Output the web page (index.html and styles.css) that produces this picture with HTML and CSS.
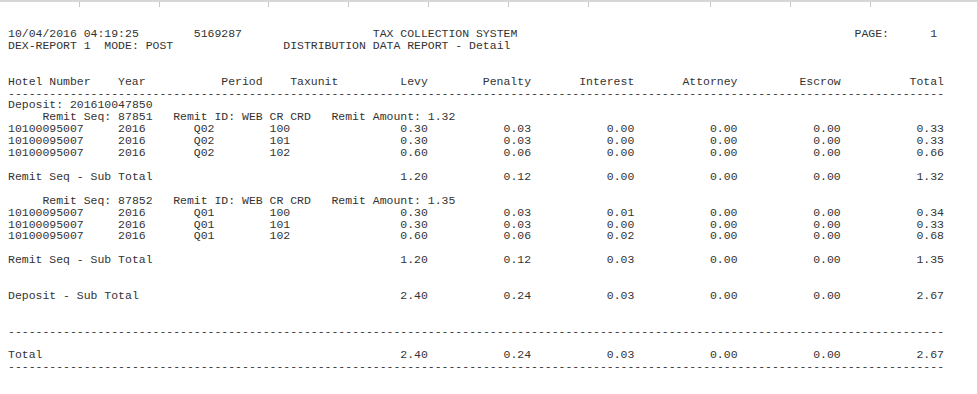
FILE: index.html
```html
<!DOCTYPE html>
<html lang="en">
<head>
<meta charset="utf-8">
<title>Distribution Data Report - Detail</title>
<link rel="stylesheet" href="styles.css">
</head>
<body>
<div class="ruler">
  <span class="rc w80"></span><span class="rc w80"></span><span class="rc w109"></span><span class="rc w80"></span><span class="rc w80"></span><span class="rc w80"></span><span class="rc w80"></span><span class="rc w122"></span><span class="rc w80"></span><span class="rc w80"></span><span class="rc rest"></span>
</div>
<div class="report">
  <div class="ln"><span class="c27">10/04/2016 04:19:25</span><span class="c26">5169287</span><span class="c70">TAX COLLECTION SYSTEM</span><span class="c11">PAGE:</span><span>1</span></div>
  <div class="ln"><span class="c40">DEX-REPORT 1  MODE: POST</span><span>DISTRIBUTION DATA REPORT - Detail</span></div>
  <div class="ln"></div>
  <div class="ln"></div>
  <div class="ln"><span class="c16">Hotel Number</span><span class="c15">Year</span><span class="c10">Period</span><span class="c7">Taxunit</span><span class="num c13">Levy</span><span class="num c15">Penalty</span><span class="num c15">Interest</span><span class="num c15">Attorney</span><span class="num c15">Escrow</span><span class="num c15">Total</span></div>
  <div class="ln"><span>--------------------------------------------------</span><span>--------------------------------------------------</span><span>------------------------------------</span></div>
  <div class="ln"><span>Deposit: 201610047850</span></div>
  <div class="ln"><span class="remit">Remit Seq: 87851   Remit ID: WEB CR CRD   Remit Amount: 1.32</span></div>
  <div class="ln"><span class="c16">10100095007</span><span class="c11">2016</span><span class="c11">Q02</span><span class="c8">100</span><span class="num c15">0.30</span><span class="num c15">0.03</span><span class="num c15">0.00</span><span class="num c15">0.00</span><span class="num c15">0.00</span><span class="num c15">0.33</span></div>
  <div class="ln"><span class="c16">10100095007</span><span class="c11">2016</span><span class="c11">Q02</span><span class="c8">101</span><span class="num c15">0.30</span><span class="num c15">0.03</span><span class="num c15">0.00</span><span class="num c15">0.00</span><span class="num c15">0.00</span><span class="num c15">0.33</span></div>
  <div class="ln"><span class="c16">10100095007</span><span class="c11">2016</span><span class="c11">Q02</span><span class="c8">102</span><span class="num c15">0.60</span><span class="num c15">0.06</span><span class="num c15">0.00</span><span class="num c15">0.00</span><span class="num c15">0.00</span><span class="num c15">0.66</span></div>
  <div class="ln"></div>
  <div class="ln"><span class="c46">Remit Seq - Sub Total</span><span class="num c15">1.20</span><span class="num c15">0.12</span><span class="num c15">0.00</span><span class="num c15">0.00</span><span class="num c15">0.00</span><span class="num c15">1.32</span></div>
  <div class="ln"></div>
  <div class="ln"><span class="remit">Remit Seq: 87852   Remit ID: WEB CR CRD   Remit Amount: 1.35</span></div>
  <div class="ln"><span class="c16">10100095007</span><span class="c11">2016</span><span class="c11">Q01</span><span class="c8">100</span><span class="num c15">0.30</span><span class="num c15">0.03</span><span class="num c15">0.01</span><span class="num c15">0.00</span><span class="num c15">0.00</span><span class="num c15">0.34</span></div>
  <div class="ln"><span class="c16">10100095007</span><span class="c11">2016</span><span class="c11">Q01</span><span class="c8">101</span><span class="num c15">0.30</span><span class="num c15">0.03</span><span class="num c15">0.00</span><span class="num c15">0.00</span><span class="num c15">0.00</span><span class="num c15">0.33</span></div>
  <div class="ln"><span class="c16">10100095007</span><span class="c11">2016</span><span class="c11">Q01</span><span class="c8">102</span><span class="num c15">0.60</span><span class="num c15">0.06</span><span class="num c15">0.02</span><span class="num c15">0.00</span><span class="num c15">0.00</span><span class="num c15">0.68</span></div>
  <div class="ln"></div>
  <div class="ln"><span class="c46">Remit Seq - Sub Total</span><span class="num c15">1.20</span><span class="num c15">0.12</span><span class="num c15">0.03</span><span class="num c15">0.00</span><span class="num c15">0.00</span><span class="num c15">1.35</span></div>
  <div class="ln"></div>
  <div class="ln"></div>
  <div class="ln"><span class="c46">Deposit - Sub Total</span><span class="num c15">2.40</span><span class="num c15">0.24</span><span class="num c15">0.03</span><span class="num c15">0.00</span><span class="num c15">0.00</span><span class="num c15">2.67</span></div>
  <div class="ln"></div>
  <div class="ln"></div>
  <div class="ln"><span>--------------------------------------------------</span><span>--------------------------------------------------</span><span>------------------------------------</span></div>
  <div class="ln"></div>
  <div class="ln"><span class="c46">Total</span><span class="num c15">2.40</span><span class="num c15">0.24</span><span class="num c15">0.03</span><span class="num c15">0.00</span><span class="num c15">0.00</span><span class="num c15">2.67</span></div>
  <div class="ln"><span>--------------------------------------------------</span><span>--------------------------------------------------</span><span>------------------------------------</span></div>
</div>
</body>
</html>
```
FILE: styles.css
```css
html, body {
  margin: 0;
  padding: 0;
  background: #ffffff;
}

.ruler {
  display: flex;
  height: 5px;
  border-top: 2px solid #d6d6d6;
}

.rc {
  box-sizing: border-box;
  flex: none;
  border-right: 1px solid #c8c8c8;
}

.rc.w80 { width: 80px; }
.rc.w109 { width: 109px; }
.rc.w122 { width: 122px; }
.rc.rest { flex: 1; border-right: none; }

.report {
  margin: 21px 0 0 8px;
  font-family: "Liberation Mono", "Courier New", monospace;
  font-size: 11.47px;
  line-height: 11.91px;
  color: #333333;
}

.ln {
  display: flex;
  height: 11.91px;
  white-space: pre;
}

.ln > span {
  flex: none;
}

.remit {
  padding-left: 5ch;
}

.num { text-align: right; }

.c7 { width: 7ch; }
.c8 { width: 8ch; }
.c10 { width: 10ch; }
.c11 { width: 11ch; }
.c13 { width: 13ch; }
.c15 { width: 15ch; }
.c16 { width: 16ch; }
.c26 { width: 26ch; }
.c27 { width: 27ch; }
.c40 { width: 40ch; }
.c46 { width: 46ch; }
.c70 { width: 70ch; }
```
